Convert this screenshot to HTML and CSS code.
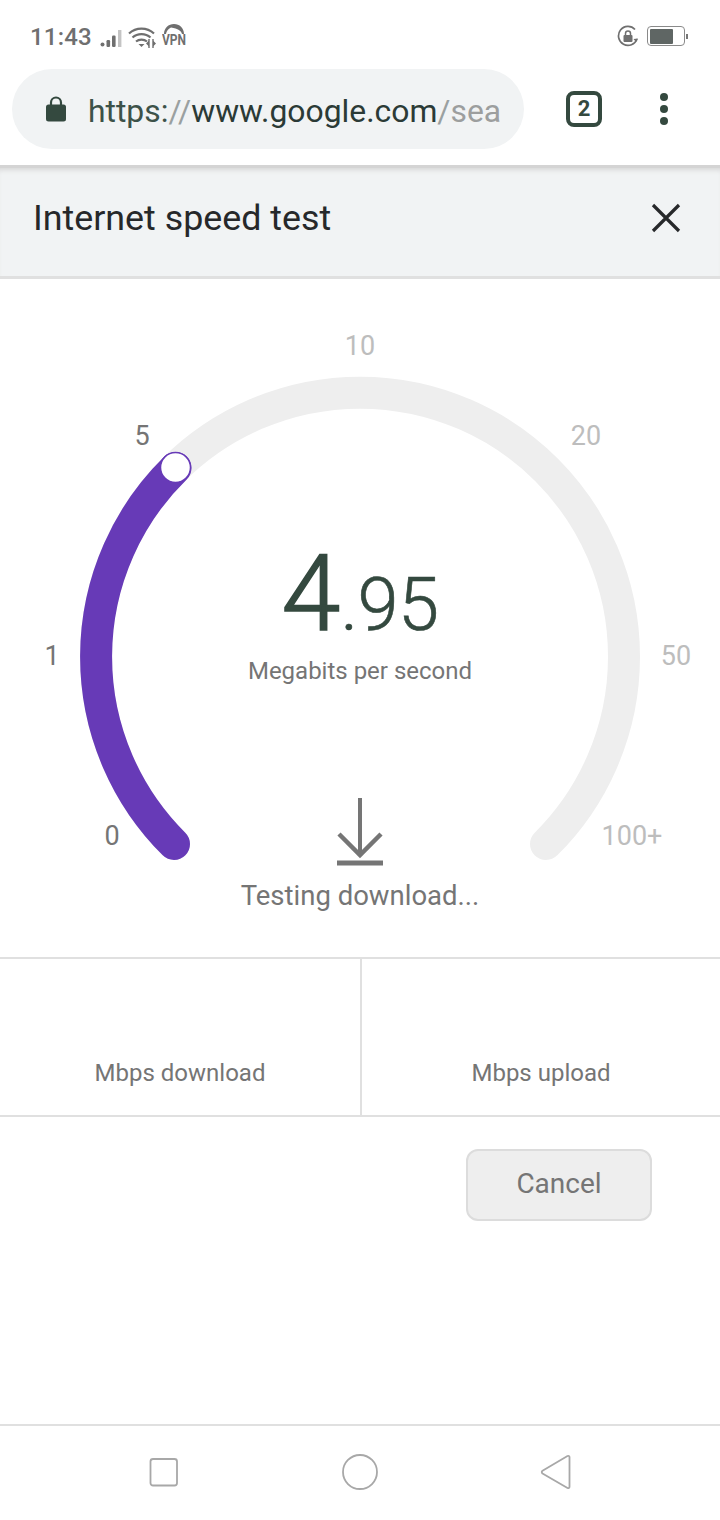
FILE: index.html
```html
<!DOCTYPE html>
<html lang="en">
<head>
<meta charset="utf-8">
<title>Internet speed test</title>
<link rel="stylesheet" href="styles.css">
</head>
<body>
<div class="phone">
  <header class="status">
    <div class="status-left">
      <span class="clock">11:43</span>
      <svg class="ic-signal" width="22" height="18" viewBox="0 0 22 18"><circle cx="2.5" cy="14.5" r="2" fill="#6f6f6f"/><rect x="6.5" y="10" width="3.6" height="7" rx="1.2" fill="#6f6f6f"/><rect x="12" y="5.5" width="3.6" height="11.5" rx="1.2" fill="#6f6f6f"/><rect x="18" y="0" width="3.4" height="17" fill="#c4c4c4"/></svg>
      <svg class="ic-wifi" width="28" height="22" viewBox="0 0 28 22" fill="none" stroke="#6f6f6f" stroke-width="2.2"><path d="M1 7.5C8 1 19 1 26 7.5"/><path d="M4.5 11.5C9.5 7 17.5 7 22.5 11.5"/><path d="M8 15.5c3-2.4 8-2.4 11 0"/><path d="M10.5 18 13.5 21 16.500 18z" fill="#6f6f6f" stroke="none"/><path d="M21 13v9M25 13v9" stroke-width="1.4"/><path d="M21 14.500 18 17.500 21 20.500zM25 14.500 28 17.500 25 20.500z" fill="#6f6f6f" stroke="none"/></svg>
      <div class="vpn">
        <svg width="22" height="10" viewBox="0 0 22 10"><path d="M1 10C1 4 5.500 0 11 0s10 4 10 10h-2C18.500 7 15 4.500 8 3.500 5 5 3.500 7 3 10z" fill="#6f6f6f"/></svg>
        <span>VPN</span>
      </div>
    </div>
    <div class="status-right">
      <svg width="22" height="22" viewBox="0 0 22 22" fill="none"><path d="M18 4.500A9.500 9.500 0 1 0 20 14" stroke="#6f6f6f" stroke-width="1.700"/><path d="M21 13.500l-2 3.500-2.500-3z" fill="#6f6f6f"/><rect x="6.500" y="10" width="9" height="7" rx="1" fill="#6f6f6f"/><path d="M8.500 10V8.500a2.500 2.500 0 0 1 5 0V10" stroke="#6f6f6f" stroke-width="1.500"/></svg>
      <div class="battery"><div class="battery-fill"></div></div>
      <div class="battery-tip"></div>
    </div>
  </header>

  <div class="toolbar">
    <div class="omnibox">
      <svg class="lock" width="22" height="27" viewBox="0 0 22 27"><path d="M6 11V7.500a5 5 0 0 1 10 0V11" fill="none" stroke="#34493f" stroke-width="2.200"/><rect x="1" y="9.500" width="20" height="17" rx="2.500" fill="#34493f"/></svg>
      <div class="url"><span class="dim">https:</span><span class="dim2">//</span><span class="strong">www.google.com</span><span class="dim2">/</span><span class="dim3">sea</span></div>
    </div>
    <div class="tabs">2</div>
    <div class="menu"><i></i><i></i><i></i></div>
  </div>

  <div class="sheet-head">
    <h1>Internet speed test</h1>
    <svg class="close" width="30" height="30" viewBox="0 0 30 30"><path d="M2 2 28 28M28 2 2 28" stroke="#26282a" stroke-width="3.200" fill="none"/></svg>
  </div>

  <main class="gauge-area">
    <svg class="gauge" width="720" height="680" viewBox="0 278 720 680">
      <path d="M174 844A264 264 0 1 1 546 844" fill="none" stroke="#eeeeee" stroke-width="32" stroke-linecap="round"/>
      <path d="M174 844A264 264 0 0 1 175.500 468" fill="none" stroke="#673ab7" stroke-width="32" stroke-linecap="round"/>
      <circle cx="175.500" cy="467.500" r="15" fill="#ffffff" stroke="#673ab7" stroke-width="1.500"/>
      <g class="tick on">
        <text x="112" y="845">0</text>
        <text x="52" y="665">1</text>
        <text x="142" y="445">5</text>
      </g>
      <g class="tick">
        <text x="360" y="355">10</text>
        <text x="586" y="445">20</text>
        <text x="676" y="665">50</text>
        <text x="632" y="845">100+</text>
      </g>
    </svg>
    <div class="speed">
      <div class="value"><span class="big">4</span><span class="small">.95</span></div>
      <div class="unit">Megabits per second</div>
    </div>
    <div class="phase">
      <svg width="48" height="70" viewBox="0 0 48 70" fill="none" stroke="#757575"><path d="M24 1V57" stroke-width="4"/><path d="M3 37 24 58 45 37" stroke-width="4.500"/><path d="M1 66H47" stroke-width="5"/></svg>
      <div class="phase-text">Testing download...</div>
    </div>
  </main>

  <section class="stats">
    <div class="stat">Mbps download</div>
    <div class="stat">Mbps upload</div>
  </section>

  <div class="actions"><button class="cancel" type="button">Cancel</button></div>

  <nav class="navbar">
    <svg width="32" height="32" viewBox="0 0 32 32" fill="none" stroke="#a8a8a8" stroke-width="1.800"><rect x="2.500" y="3" width="26.500" height="26.500" rx="2.500"/></svg>
    <svg width="38" height="38" viewBox="0 0 38 38" fill="none" stroke="#a8a8a8" stroke-width="1.800"><circle cx="19" cy="19" r="17"/></svg>
    <svg width="34" height="38" viewBox="0 0 34 38" fill="none" stroke="#a8a8a8" stroke-width="1.800"><path d="M28.500 3 3.500 17.700c-1 .8-1 2 0 2.800L28.500 35c1 .5 2 0 2-1.300V4c0-1-1-1.500-2-1z" stroke-linejoin="round"/></svg>
  </nav>
</div>
</body>
</html>
```
FILE: styles.css
```css
* { box-sizing: border-box; }
html, body { margin: 0; padding: 0; background: #ffffff; }
body { font-family: Roboto, "Liberation Sans", sans-serif; }
.phone { width: 720px; height: 1520px; display: flex; flex-direction: column; overflow: hidden; }

.status { height: 69px; flex: none; display: flex; justify-content: space-between; align-items: flex-start; padding: 23px 32px 0 30px; }
.status-left { display: flex; align-items: center; gap: 6px; height: 28px; }
.clock { font-size: 24px; font-weight: 500; color: #6f6f6f; letter-spacing: .2px; line-height: 30px; }
.ic-signal { margin: 3px 0 0 2px; }
.ic-wifi { margin-top: 0; }
.vpn { display: flex; flex-direction: column; align-items: center; width: 24px; margin-top: -4px; }
.vpn span { font-size: 15px; font-weight: 700; color: #6f6f6f; line-height: 13px; transform: scaleX(.8); }
.status-right { display: flex; align-items: center; height: 26px; }
.battery { width: 38px; height: 20px; margin-left: 8px; border: 1.500px solid #8a8a8a; border-radius: 4px; padding: 1.500px; background: #fff; }
.battery-fill { width: 23px; height: 100%; background: #5f6664; border-radius: 1px; }
.battery-tip { width: 2px; height: 5px; background: #777; margin-left: 1px; }

.toolbar { height: 96px; flex: none; display: flex; align-items: flex-start; padding-left: 12px; }
.omnibox { width: 512px; height: 80px; border-radius: 40px; background: #f1f3f4; display: flex; align-items: center; padding-left: 33px; overflow: hidden; }
.lock { flex: none; margin-top: -2px; }
.url { margin: 3px 0 0 21px; font-size: 31.85px; line-height: 40px; white-space: nowrap; color: #2f3f3a; width: 420px; }
.dim { color: #3d5249; }
.dim2 { color: #9aa0a0; }
.strong { color: #2b3a36; }
.dim3 { color: #9c9e9e; }
.tabs { width: 36px; height: 36px; margin: 22px 0 0 42px; border: 4px solid #34493f; border-radius: 8px; font-size: 22px; font-weight: 700; line-height: 28px; text-align: center; color: #34493f; }
.menu { display: flex; flex-direction: column; gap: 4px; margin: 24px 0 0 58px; }
.menu i { display: block; width: 8px; height: 8px; border-radius: 50%; background: #34493f; }

.sheet-head { height: 114px; flex: none; background: #f1f3f4; display: flex; justify-content: space-between; align-items: center; padding: 0 39px 8px 33px; border-top: 3px solid #d4d4d4; border-bottom: 3px solid #e0e0e0; box-shadow: inset 0 5px 5px -3px #d6d6d6; }
.sheet-head h1 { margin: 0; font-size: 35.8px; font-weight: 400; color: #26282a; line-height: 44px; }

.gauge-area { position: relative; height: 678px; flex: none; }
.gauge { position: absolute; left: 0; top: -1px; }
.tick text { font-family: Roboto, sans-serif; font-size: 27px; fill: #bdbdbd; text-anchor: middle; }
.tick.on text { fill: #757575; }
.speed { position: absolute; left: 0; right: 0; top: 260px; text-align: center; }
.value { color: #34493f; line-height: 110px; height: 110px; }
.big { font-size: 106px; font-weight: 300; -webkit-text-stroke: 1.6px #34493f; }
.small { font-size: 74px; font-weight: 300; letter-spacing: -.6px; -webkit-text-stroke: .6px #34493f; }
.unit { font-size: 24px; line-height: 30px; color: #757575; margin-top: 7px; }
.phase { position: absolute; left: 0; right: 0; top: 518px; display: flex; flex-direction: column; align-items: center; }
.phase-text { font-size: 27.5px; line-height: 36px; color: #757575; margin-top: 11px; }

.stats { height: 160px; flex: none; display: grid; grid-template-columns: 362px 1fr; border-top: 2px solid #e0e0e0; border-bottom: 2px solid #e0e0e0; }
.stat { display: flex; align-items: flex-end; justify-content: center; padding-bottom: 27px; font-size: 24px; line-height: 30px; color: #757575; }
.stat:first-child { border-right: 2px solid #e0e0e0; }

.actions { flex: 1; display: flex; justify-content: flex-end; align-items: flex-start; padding: 32px 68px 0 0; }
.cancel { width: 186px; height: 72px; background: #eeeeee; border: 2px solid #dcdcdc; border-radius: 12px; font-family: Roboto, sans-serif; font-size: 28px; color: #757575; padding: 0 0 4px; }

.navbar { height: 96px; flex: none; border-top: 2px solid #e0e0e0; display: flex; align-items: center; padding-bottom: 2px; }
.navbar svg:nth-child(1) { margin-left: 148px; }
.navbar svg:nth-child(2) { margin-left: 161px; }
.navbar svg:nth-child(3) { margin-left: 160px; }
```
